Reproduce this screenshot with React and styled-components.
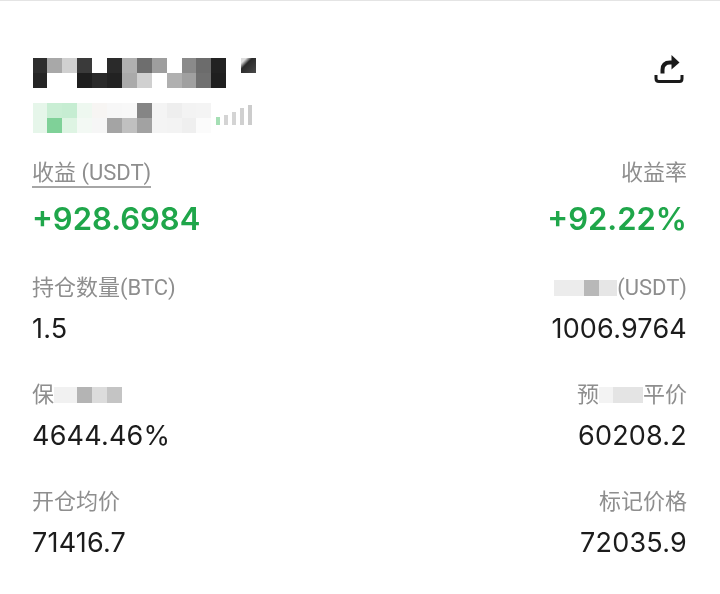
import React from "react";
import styled, { createGlobalStyle } from "styled-components";

const Global = createGlobalStyle`
  html, body { margin: 0; background: #fff; }
  body { font-family: Inter, "Noto Sans CJK SC", sans-serif; }
`;
const Page = styled.div`
  width: 720px;
  height: 594px;
  box-sizing: border-box;
  border-top: 1px solid #e4e4e4;
  padding: 57px 33px 0 32px;
  overflow: hidden;
`;
const Header = styled.header`
  display: flex;
  justify-content: space-between;
  align-items: flex-start;
  height: 102px;
`;
const Identity = styled.div`
  display: flex;
  flex-direction: column;
  gap: 15px;
  padding-left: 0.6px;
`;
const Mosaic = styled.div`
  display: grid;
  grid-template-columns: repeat(${(p) => p.$cols}, 14.9px);
  grid-auto-rows: 15px;
  filter: blur(0.6px);
`;
const Cell = styled.div`
  background: ${(p) => p.$c};
`;
const SubLine = styled.div`
  display: flex;
  align-items: flex-end;
`;
const Signal = styled.div`
  display: flex;
  align-items: flex-end;
  gap: 4px;
  margin: 0 0 8px 5px;
  filter: blur(0.5px);
`;
const SignalBar = styled.span`
  width: 4px;
  height: ${(p) => p.$h}px;
  background: ${(p) => p.$c};
`;
const ShareButton = styled.div`
  width: 30px;
  height: 30px;
  margin-top: -4px;
  margin-right: 3px;
`;
const Stats = styled.div`
  display: grid;
  grid-template-columns: 1fr 1fr;
  filter: blur(0.25px);
`;
const Stat = styled.div`
  height: 107px;
  display: flex;
  flex-direction: column;
  align-items: ${(p) => (p.$right ? "flex-end" : "flex-start")};
  &:nth-child(-n + 2) { height: 115px; }
`;
const Label = styled.div`
  font-family: Roboto, "Noto Sans CJK SC", sans-serif;
  font-size: 22px;
  line-height: 26px;
  height: 26px;
  color: #8e8e8e;
  display: flex;
  align-items: center;
  white-space: pre;
  ${(p) => p.$underline && "box-shadow: 0 2px 0 #a6a6a6;"}
`;
const Value = styled.div`
  font-size: 27px;
  line-height: 32px;
  margin-top: 12px;
  letter-spacing: 0.2px;
  color: #1c1c1c;
`;
const Gain = styled(Value)`
  font-size: 31px;
  font-weight: 600;
  margin-top: 17px;
  letter-spacing: 0;
  color: #1fa64a;
`;
const Redact = styled.span`
  display: inline-flex;
  filter: blur(0.4px);
`;
const RedactBlock = styled.span`
  width: ${(p) => p.$w}px;
  height: 16px;
  background: ${(p) => p.$c};
`;
const SLASH = "linear-gradient(to bottom right, #ddd 18%, #2a2a2a 38%, #4a4a4a)";
const TopRow1 = ["#2e2e2e","#a8a8a8","#d0d0d0","#3a3a3a","#fff","#2a2a2a","#b0b0b0","#6e6e6e","#9e9e9e","#fff","#8a8a8a","#6c6c6c","#222","#fff",SLASH];
const TopRow2 = ["#252525","#fff","#fff","#1e1e1e","#2a2a2a","#222","#aaa","#d0d0d0","#fff","#b0b0b0","#a0a0a0","#707070","#1f1f1f","#fff","#fff"];
const SubRow1 = ["#e6f6ea","#c9eed4","#c6edd2","#eef8f0","#f7f5f3","#f7f7f7","#f8f8f8","#858585","#f4f4f4","#eeeeee","#f3f3f3","#f4f4f4"];
const SubRow2 = ["#e6f6ea","#7fd198","#def4e3","#f3f9f4","#f6f6f6","#a4a4a4","#c0c0c0","#a2a2a2","#f4f4f4","#f3f3f3","#efefef","#fbfbfb"];
const BARS = [[8, "#a5dfb5"], [10, "#d4d4d4"], [13, "#d4d4d4"], [17, "#d0d0d0"], [20, "#cccccc"]];

export default function App() {
  return (
    <Page>
      <Global />
      <Header>
        <Identity>
          <Mosaic $cols={15}>
            {[...TopRow1, ...TopRow2].map((c, i) => <Cell key={i} $c={c} />)}
          </Mosaic>
          <SubLine>
            <Mosaic $cols={12}>
              {[...SubRow1, ...SubRow2].map((c, i) => <Cell key={i} $c={c} />)}
            </Mosaic>
            <Signal>
              {BARS.map(([h, c], i) => <SignalBar key={i} $h={h} $c={c} />)}
            </Signal>
          </SubLine>
        </Identity>
        <ShareButton>
          <svg width="30" height="30" viewBox="0 0 30 30" fill="none">
            <path d="M8.5 19.5 V16 Q8.5 8.5 16 8.5 H19" stroke="#1a1a1a" strokeWidth="4" />
            <path d="M17.5 1 L25.5 8.5 L17.5 15.5 Z" fill="#1a1a1a" />
            <path d="M2 21 V24.5 Q2 27.5 5 27.5 H25.5 Q28 27.5 28 24.5 V21" stroke="#1a1a1a" strokeWidth="3" />
          </svg>
        </ShareButton>
      </Header>
      <Stats>
        <Stat>
          <Label $underline>收益 (USDT)</Label>
          <Gain>+928.6984</Gain>
        </Stat>
        <Stat $right>
          <Label>收益率</Label>
          <Gain>+92.22%</Gain>
        </Stat>
        <Stat>
          <Label>持仓数量(BTC)</Label>
          <Value>1.5</Value>
        </Stat>
        <Stat $right>
          <Label>
            <Redact>
              <RedactBlock $w={30} $c="#ececec" />
              <RedactBlock $w={15} $c="#b8b8b8" />
              <RedactBlock $w={18} $c="#e6e6e6" />
            </Redact>
            (USDT)
          </Label>
          <Value>1006.9764</Value>
        </Stat>
        <Stat>
          <Label>
            保
            <Redact>
              <RedactBlock $w={23} $c="#f1f1f1" />
              <RedactBlock $w={15} $c="#b4b4b4" />
              <RedactBlock $w={15} $c="#dcdcdc" />
              <RedactBlock $w={15} $c="#c4c4c4" />
            </Redact>
          </Label>
          <Value>4644.46%</Value>
        </Stat>
        <Stat $right>
          <Label>
            预
            <Redact>
              <RedactBlock $w={14} $c="#f3f3f3" />
              <RedactBlock $w={30} $c="#e4e4e4" />
            </Redact>
            平价
          </Label>
          <Value>60208.2</Value>
        </Stat>
        <Stat>
          <Label>开仓均价</Label>
          <Value>71416.7</Value>
        </Stat>
        <Stat $right>
          <Label>标记价格</Label>
          <Value>72035.9</Value>
        </Stat>
      </Stats>
    </Page>
  );
}
